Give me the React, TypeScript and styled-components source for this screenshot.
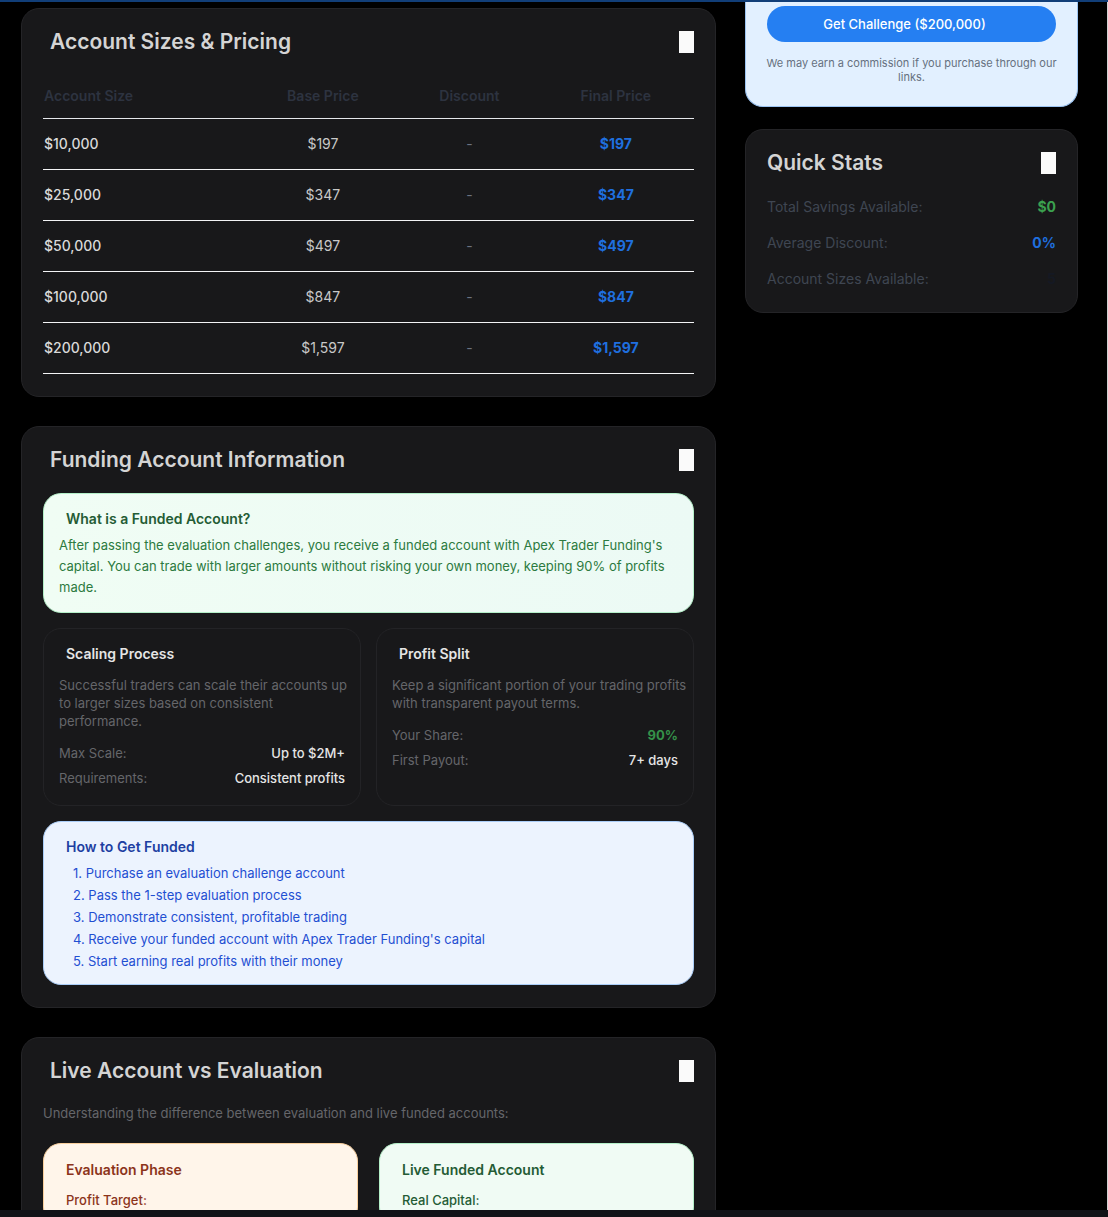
import React from "react";
import styled, { createGlobalStyle } from "styled-components";

const GlobalStyle = createGlobalStyle`
  *, *::before, *::after { box-sizing: border-box; }
  body { margin: 0; background: #000; font-family: Inter, "Liberation Sans", sans-serif; }
  h2, h3, p, ol, dl, dd { margin: 0; padding: 0; }
`;

const Shell = styled.div`
  display: flex;
  flex-direction: column;
  height: 100vh;
  background: #000;
`;

const TopBar = styled.div`
  flex: none;
  height: 2px;
  background: #113e78;
`;

const BottomBar = styled.div`
  flex: none;
  height: 7px;
  background: #111217;
`;

const Page = styled.main`
  flex: 1;
  min-height: 0;
  overflow: hidden;
  display: grid;
  grid-template-columns: repeat(3, minmax(0, 1fr));
  align-items: start;
  gap: 29px;
  padding: 0 29px 0 21px;
  border-right: 1px solid #d4d4d4;
`;

const Content = styled.div`
  grid-column: span 2;
  display: flex;
  flex-direction: column;
  gap: 29px;
  padding-top: 6px;
`;

const Sidebar = styled.aside`
  display: flex;
  flex-direction: column;
  gap: 22px;
`;

const Card = styled.section`
  padding: 22px 21px;
  border: 1px solid #242427;
  border-radius: 18px;
  background: #18181a;
`;

const CardHeader = styled.header<{ $gap: number }>`
  display: flex;
  align-items: center;
  justify-content: space-between;
  margin-bottom: ${(p) => p.$gap}px;
`;

const CardTitle = styled.h2<{ $inset?: boolean }>`
  padding-left: ${(p) => (p.$inset ? 7 : 0)}px;
  font-size: 21px;
  font-weight: 600;
  line-height: 22px;
  color: #d4d4d4;
`;

const Marker = styled.span`
  width: 15px;
  height: 22px;
  background: #fafafa;
`;

const PriceTable = styled.table`
  width: 100%;
  table-layout: fixed;
  border-collapse: separate;
  border-spacing: 0;
  font-size: 14px;
  line-height: 22px;
`;

const HeadCell = styled.th<{ $width: number; $first?: boolean }>`
  width: ${(p) => p.$width}%;
  padding: 0 1px 11px;
  border-bottom: 1px solid #e5e7eb;
  text-align: ${(p) => (p.$first ? "left" : "center")};
  font-weight: 600;
  color: #2d3340;
`;

const Cell = styled.td<{ $tone: "size" | "base" | "muted" | "final" }>`
  padding: 14px 1px;
  border-bottom: 1px solid #f3f4f6;
  text-align: ${(p) => (p.$tone === "size" ? "left" : "center")};
  font-weight: ${(p) => ({ size: 500, base: 400, muted: 400, final: 700 })[p.$tone]};
  color: ${(p) => ({ size: "#d9d9d9", base: "#c8c8c8", muted: "#6b7280", final: "#1f6fdf" })[p.$tone]};
`;

const tones = {
  green: { bg: "linear-gradient(90deg, #f0fdf4, #ecfaf5)", line: "#b4efc8", head: "#245c35", text: "#2c7a40" },
  blue: { bg: "#ecf3fe", line: "#aacdf8", head: "#1e3fa2", text: "#1f4fd2" },
  orange: { bg: "#fff5ea", line: "#f8cf9d", head: "#8c341b", text: "#8c341b" },
  mint: { bg: "#f0fbf4", line: "#b4efc8", head: "#245c35", text: "#245c35" },
  dark: { bg: "#18181a", line: "#232326", head: "#e5e5e5", text: "#65666a" },
};

const Panel = styled.div<{ $tone: keyof typeof tones; $wide?: boolean }>`
  padding: ${(p) => (p.$wide ? "15px 22px" : "14px 15px")};
  border: 1px solid ${(p) => tones[p.$tone].line};
  border-radius: 18px;
  background: ${(p) => tones[p.$tone].bg};
  color: ${(p) => tones[p.$tone].text};
  font-size: 13px;
`;

const PanelTitle = styled.h3<{ $tone: keyof typeof tones; $inset?: boolean }>`
  padding-left: ${(p) => (p.$inset ? 7 : 0)}px;
  font-size: 14px;
  font-weight: 600;
  line-height: 22px;
  color: ${(p) => tones[p.$tone].head};
`;

const Copy = styled.p<{ $leading: number; $top?: number }>`
  margin-top: ${(p) => p.$top ?? 0}px;
  margin-right: -10px;
  font-size: 13px;
  line-height: ${(p) => p.$leading}px;
`;

const Intro = styled.p`
  margin-bottom: 21px;
  font-size: 13px;
  line-height: 18px;
  color: #65666a;
`;

const Stack = styled.div`
  display: flex;
  flex-direction: column;
  gap: 15px;
`;

const Columns = styled.div<{ $gap: number }>`
  display: grid;
  grid-template-columns: 1fr 1fr;
  gap: ${(p) => p.$gap}px;
`;

const Facts = styled.dl`
  display: flex;
  flex-direction: column;
  gap: 7px;
  padding: 14px 0 4px;
  line-height: 18px;
`;

const Fact = styled.div`
  display: flex;
  justify-content: space-between;
`;

const FactValue = styled.dd<{ $accent?: boolean }>`
  font-weight: ${(p) => (p.$accent ? 700 : 500)};
  color: ${(p) => (p.$accent ? "#359149" : "#e5e5e5")};
`;

const Steps = styled.ol`
  display: flex;
  flex-direction: column;
  gap: 4px;
  padding: 6px 0 0 14px;
  list-style: none;
  line-height: 18px;
`;

const Term = styled.p`
  margin-top: 10px;
  font-weight: 500;
  line-height: 18px;
`;

const OfferCard = styled.section`
  padding: 4px 21px 22px;
  border: 1px solid #9cc4f2;
  border-top: 0;
  border-radius: 0 0 18px 18px;
  background: #e2f0ff;
`;

const OfferButton = styled.button`
  display: block;
  width: 100%;
  height: 36px;
  padding: 0 14px 0 0;
  border: 0;
  border-radius: 18px;
  background: #257ff2;
  color: #fff;
  font-family: inherit;
  font-size: 13px;
  font-weight: 500;
  cursor: pointer;
`;

const Disclosure = styled.p`
  margin: 14px -4px 0;
  text-align: center;
  font-size: 11px;
  line-height: 14px;
  color: #667080;
`;

const Stats = styled.dl`
  display: flex;
  flex-direction: column;
  gap: 14px;
  font-size: 14px;
  line-height: 22px;
`;

const StatLabel = styled.dt`
  color: #3f4652;
`;

const StatValue = styled.dd<{ $color: string }>`
  font-weight: 700;
  color: ${(p) => p.$color};
`;

const prices = [
  ["$10,000", "$197"],
  ["$25,000", "$347"],
  ["$50,000", "$497"],
  ["$100,000", "$847"],
  ["$200,000", "$1,597"],
];

const steps = [
  "Purchase an evaluation challenge account",
  "Pass the 1-step evaluation process",
  "Demonstrate consistent, profitable trading",
  "Receive your funded account with Apex Trader Funding's capital",
  "Start earning real profits with their money",
];

function Header({ title, gap, inset = true }: { title: string; gap: number; inset?: boolean }) {
  return (
    <CardHeader $gap={gap}>
      <CardTitle $inset={inset}>{title}</CardTitle>
      <Marker />
    </CardHeader>
  );
}

function FactList({ items }: { items: { label: string; value: string; accent?: boolean }[] }) {
  return (
    <Facts>
      {items.map((f) => (
        <Fact key={f.label}>
          <dt>{f.label}</dt>
          <FactValue $accent={f.accent}>{f.value}</FactValue>
        </Fact>
      ))}
    </Facts>
  );
}

export default function App() {
  return (
    <Shell>
      <GlobalStyle />
      <TopBar />
      <Page>
        <Content>
          <Card>
            <Header title="Account Sizes & Pricing" gap={32} />
            <PriceTable>
              <thead>
                <tr>
                  <HeadCell $width={31} $first>Account Size</HeadCell>
                  <HeadCell $width={24}>Base Price</HeadCell>
                  <HeadCell $width={21}>Discount</HeadCell>
                  <HeadCell $width={24}>Final Price</HeadCell>
                </tr>
              </thead>
              <tbody>
                {prices.map(([size, price]) => (
                  <tr key={size}>
                    <Cell $tone="size">{size}</Cell>
                    <Cell $tone="base">{price}</Cell>
                    <Cell $tone="muted">-</Cell>
                    <Cell $tone="final">{price}</Cell>
                  </tr>
                ))}
              </tbody>
            </PriceTable>
          </Card>

          <Card>
            <Header title="Funding Account Information" gap={22} />
            <Stack>
              <Panel $tone="green">
                <PanelTitle $tone="green" $inset>What is a Funded Account?</PanelTitle>
                <Copy $leading={21} $top={5}>
                  After passing the evaluation challenges, you receive a funded account with Apex Trader
                  Funding's capital. You can trade with larger amounts without risking your own money,
                  keeping 90% of profits made.
                </Copy>
              </Panel>
              <Columns $gap={15}>
                <Panel $tone="dark">
                  <PanelTitle $tone="dark" $inset>Scaling Process</PanelTitle>
                  <Copy $leading={18} $top={11}>
                    Successful traders can scale their accounts up to larger sizes based on consistent
                    performance.
                  </Copy>
                  <FactList
                    items={[
                      { label: "Max Scale:", value: "Up to $2M+" },
                      { label: "Requirements:", value: "Consistent profits" },
                    ]}
                  />
                </Panel>
                <Panel $tone="dark">
                  <PanelTitle $tone="dark" $inset>Profit Split</PanelTitle>
                  <Copy $leading={18} $top={11}>
                    Keep a significant portion of your trading profits with transparent payout terms.
                  </Copy>
                  <FactList
                    items={[
                      { label: "Your Share:", value: "90%", accent: true },
                      { label: "First Payout:", value: "7+ days" },
                    ]}
                  />
                </Panel>
              </Columns>
              <Panel $tone="blue">
                <PanelTitle $tone="blue" $inset>How to Get Funded</PanelTitle>
                <Steps>
                  {steps.map((s, i) => (
                    <li key={s}>{`${i + 1}. ${s}`}</li>
                  ))}
                </Steps>
              </Panel>
            </Stack>
          </Card>

          <Card>
            <Header title="Live Account vs Evaluation" gap={22} />
            <Intro>Understanding the difference between evaluation and live funded accounts:</Intro>
            <Columns $gap={21}>
              <Panel $tone="orange" $wide>
                <PanelTitle $tone="orange">Evaluation Phase</PanelTitle>
                <Term>Profit Target:</Term>
              </Panel>
              <Panel $tone="mint" $wide>
                <PanelTitle $tone="mint">Live Funded Account</PanelTitle>
                <Term>Real Capital:</Term>
              </Panel>
            </Columns>
          </Card>
        </Content>

        <Sidebar>
          <OfferCard>
            <OfferButton type="button">Get Challenge ($200,000)</OfferButton>
            <Disclosure>We may earn a commission if you purchase through our links.</Disclosure>
          </OfferCard>
          <Card>
            <Header title="Quick Stats" gap={22} inset={false} />
            <Stats>
              <Fact>
                <StatLabel>Total Savings Available:</StatLabel>
                <StatValue $color="#3ba04f">$0</StatValue>
              </Fact>
              <Fact>
                <StatLabel>Average Discount:</StatLabel>
                <StatValue $color="#1f6fdf">0%</StatValue>
              </Fact>
              <Fact>
                <StatLabel>Account Sizes Available:</StatLabel>
                <StatValue $color="#151923">5</StatValue>
              </Fact>
            </Stats>
          </Card>
        </Sidebar>
      </Page>
      <BottomBar />
    </Shell>
  );
}
